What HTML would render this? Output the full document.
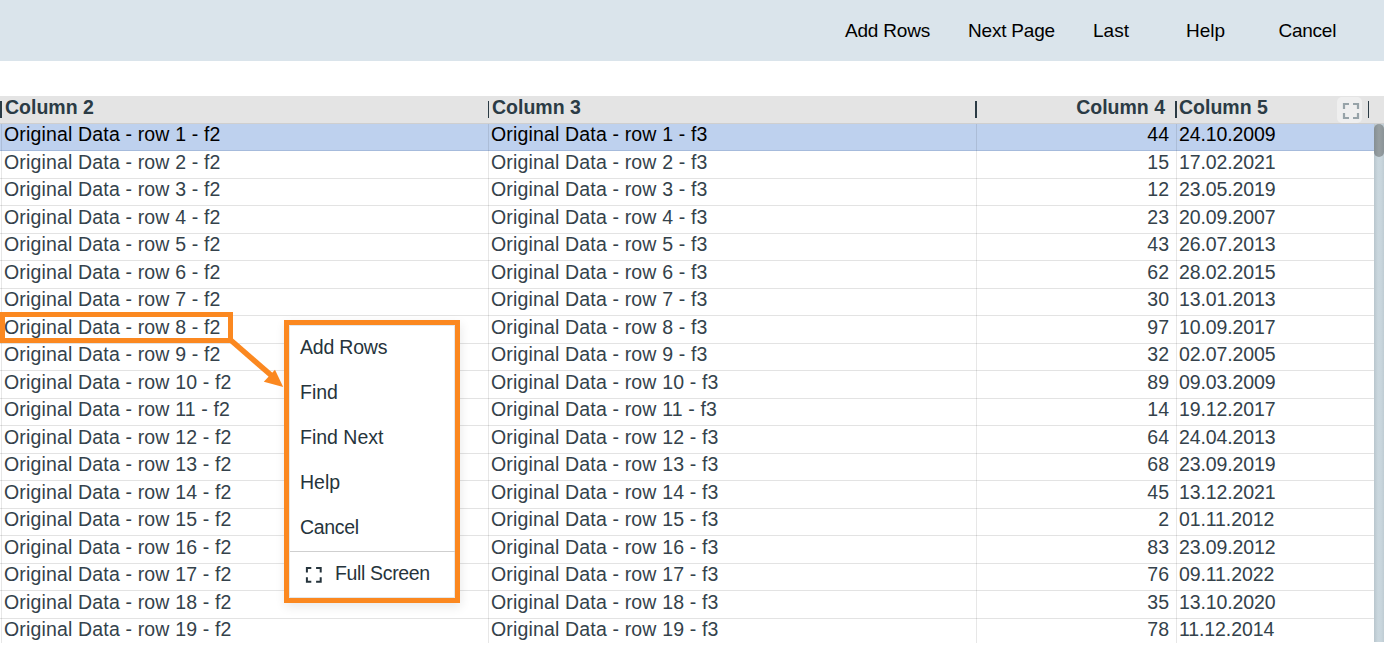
<!DOCTYPE html>
<html><head><meta charset="utf-8">
<style>
html,body{margin:0;padding:0;}
body{width:1384px;height:645px;overflow:hidden;background:#fff;position:relative;font-family:"Liberation Sans",sans-serif;}
.topbar{position:absolute;left:0;top:0;width:1384px;height:61px;background:#dae4eb;}
.tb{position:absolute;top:0;height:61px;line-height:61px;font-size:19px;color:#000;white-space:nowrap;}
.hdr{position:absolute;left:0;top:96px;width:1384px;height:27px;background:#e4e4e4;border-bottom:1px solid #cfcfcf;}
.hdr span{position:absolute;top:0;line-height:22px;font-size:19.5px;font-weight:bold;color:#2b3b45;white-space:nowrap;}
.sep{position:absolute;top:5px;height:17px;background:#2b3b45;}
.row{position:absolute;left:0;width:1374px;height:27.5px;box-sizing:border-box;border-bottom:1px solid #e3e3e3;background:#fff;}
.row.sel{background:#bed1ee;border-bottom-color:#a6bbdc;}
.row span{position:absolute;top:-0.3px;line-height:22px;font-size:19.5px;color:#34424b;white-space:nowrap;}
.row.sel span{color:#000;}
.c2{left:4px;letter-spacing:0.16px;}
.c3{left:491px;letter-spacing:0.16px;}
.c4{right:205px;}
.c5{left:1179px;letter-spacing:-0.1px;}
.vl{position:absolute;width:1px;background:rgba(0,0,0,0.095);}
.sb{position:absolute;left:1374px;top:124px;width:10px;height:518px;background:linear-gradient(to right,#b9c6cd,#cad7de 40%,#c9d6dd 70%,#bfccd3);}
.thumb{position:absolute;left:1374px;top:124px;width:10px;height:33px;background:linear-gradient(to right,#868f93,#979fa2 50%,#8a9397);border-radius:5px;}
.menu{position:absolute;left:284px;top:320px;width:176px;height:283px;box-sizing:border-box;border:5px solid #fb8820;background:#fff;box-shadow:1px 4px 10px rgba(0,0,0,0.09), inset 0 0 0 1px #e2e8ec;}
.mi{position:absolute;left:300px;line-height:22px;font-size:19.5px;color:#26343c;white-space:nowrap;}
.hl{position:absolute;left:0;top:312px;width:233px;height:31px;box-sizing:border-box;border:5px solid #fb8820;}
</style></head><body>
<div class="topbar">
<div class="tb" style="left:845px;letter-spacing:-0.2px">Add Rows</div>
<div class="tb" style="left:968px;letter-spacing:-0.2px">Next Page</div>
<div class="tb" style="left:1093px">Last</div>
<div class="tb" style="left:1186px">Help</div>
<div class="tb" style="left:1278.5px;letter-spacing:-0.25px">Cancel</div>
</div>
<div class="hdr">
<div class="sep" style="left:0;width:2px"></div>
<span style="left:5px">Column 2</span>
<div class="sep" style="left:488px;width:1px"></div>
<span style="left:492px">Column 3</span>
<div class="sep" style="left:975px;width:2px"></div>
<span style="right:219px">Column 4</span>
<div class="sep" style="left:1175px;width:2px"></div>
<span style="left:1179px">Column 5</span>
<div style="position:absolute;left:1337px;top:1px;width:25px;height:26px;background:#efefef;border-radius:5px;"></div>
<svg style="position:absolute;left:1337px;top:1px" width="25" height="26" viewBox="0 0 25 26"><path d="M7 12V7h5M16 7h5v5M21 16v5h-5M12 21H7v-5" fill="none" stroke="#97a3a8" stroke-width="2.2"/></svg>
<div class="sep" style="left:1368px;width:1px"></div>
</div>
<div class="row sel" style="top:123.5px"><span class="c2">Original Data - row 1 - f2</span><span class="c3">Original Data - row 1 - f3</span><span class="c4">44</span><span class="c5">24.10.2009</span></div>
<div class="row" style="top:151.0px"><span class="c2">Original Data - row 2 - f2</span><span class="c3">Original Data - row 2 - f3</span><span class="c4">15</span><span class="c5">17.02.2021</span></div>
<div class="row" style="top:178.5px"><span class="c2">Original Data - row 3 - f2</span><span class="c3">Original Data - row 3 - f3</span><span class="c4">12</span><span class="c5">23.05.2019</span></div>
<div class="row" style="top:206.0px"><span class="c2">Original Data - row 4 - f2</span><span class="c3">Original Data - row 4 - f3</span><span class="c4">23</span><span class="c5">20.09.2007</span></div>
<div class="row" style="top:233.5px"><span class="c2">Original Data - row 5 - f2</span><span class="c3">Original Data - row 5 - f3</span><span class="c4">43</span><span class="c5">26.07.2013</span></div>
<div class="row" style="top:261.0px"><span class="c2">Original Data - row 6 - f2</span><span class="c3">Original Data - row 6 - f3</span><span class="c4">62</span><span class="c5">28.02.2015</span></div>
<div class="row" style="top:288.5px"><span class="c2">Original Data - row 7 - f2</span><span class="c3">Original Data - row 7 - f3</span><span class="c4">30</span><span class="c5">13.01.2013</span></div>
<div class="row" style="top:316.0px"><span class="c2">Original Data - row 8 - f2</span><span class="c3">Original Data - row 8 - f3</span><span class="c4">97</span><span class="c5">10.09.2017</span></div>
<div class="row" style="top:343.5px"><span class="c2">Original Data - row 9 - f2</span><span class="c3">Original Data - row 9 - f3</span><span class="c4">32</span><span class="c5">02.07.2005</span></div>
<div class="row" style="top:371.0px"><span class="c2">Original Data - row 10 - f2</span><span class="c3">Original Data - row 10 - f3</span><span class="c4">89</span><span class="c5">09.03.2009</span></div>
<div class="row" style="top:398.5px"><span class="c2">Original Data - row 11 - f2</span><span class="c3">Original Data - row 11 - f3</span><span class="c4">14</span><span class="c5">19.12.2017</span></div>
<div class="row" style="top:426.0px"><span class="c2">Original Data - row 12 - f2</span><span class="c3">Original Data - row 12 - f3</span><span class="c4">64</span><span class="c5">24.04.2013</span></div>
<div class="row" style="top:453.5px"><span class="c2">Original Data - row 13 - f2</span><span class="c3">Original Data - row 13 - f3</span><span class="c4">68</span><span class="c5">23.09.2019</span></div>
<div class="row" style="top:481.0px"><span class="c2">Original Data - row 14 - f2</span><span class="c3">Original Data - row 14 - f3</span><span class="c4">45</span><span class="c5">13.12.2021</span></div>
<div class="row" style="top:508.5px"><span class="c2">Original Data - row 15 - f2</span><span class="c3">Original Data - row 15 - f3</span><span class="c4">2</span><span class="c5">01.11.2012</span></div>
<div class="row" style="top:536.0px"><span class="c2">Original Data - row 16 - f2</span><span class="c3">Original Data - row 16 - f3</span><span class="c4">83</span><span class="c5">23.09.2012</span></div>
<div class="row" style="top:563.5px"><span class="c2">Original Data - row 17 - f2</span><span class="c3">Original Data - row 17 - f3</span><span class="c4">76</span><span class="c5">09.11.2022</span></div>
<div class="row" style="top:591.0px"><span class="c2">Original Data - row 18 - f2</span><span class="c3">Original Data - row 18 - f3</span><span class="c4">35</span><span class="c5">13.10.2020</span></div>
<div class="row" style="top:618.5px"><span class="c2">Original Data - row 19 - f2</span><span class="c3">Original Data - row 19 - f3</span><span class="c4">78</span><span class="c5">11.12.2014</span></div>
<div class="vl" style="left:1px;top:124px;height:519px"></div>
<div class="vl" style="left:488px;top:124px;height:519px"></div>
<div class="vl" style="left:976px;top:124px;height:519px"></div>
<div class="vl" style="left:1176px;top:124px;height:519px"></div>

<div class="menu"></div>
<div class="mi" style="top:335.7px;letter-spacing:-0.2px">Add Rows</div>
<div class="mi" style="top:381.1px">Find</div>
<div class="mi" style="top:426.1px">Find Next</div>
<div class="mi" style="top:471.1px">Help</div>
<div class="mi" style="top:515.8px;letter-spacing:-0.3px">Cancel</div>
<div style="position:absolute;left:290px;top:551px;width:165px;height:1px;background:#cfcfcf"></div>
<svg style="position:absolute;left:300px;top:562px" width="28" height="26" viewBox="0 0 28 26"><path d="M6.9 10.6V6h4.4M16.1 6h4.6v4.6M20.7 15.2v4.6h-4.6M11.3 19.8H6.9v-4.6" fill="none" stroke="#26343c" stroke-width="2"/></svg>
<div class="mi" style="top:561.9px;left:335px;letter-spacing:-0.35px">Full Screen</div>
<div class="hl"></div>
<svg style="position:absolute;left:0;top:0" width="1384" height="645"><line x1="230" y1="339.5" x2="272" y2="376" stroke="#fb8820" stroke-width="5.5"/><polygon points="283.2,387 263.8,381.8 275,369.8" fill="#fb8820"/></svg>
<div class="sb"></div>
<div class="thumb"></div>
</body></html>
